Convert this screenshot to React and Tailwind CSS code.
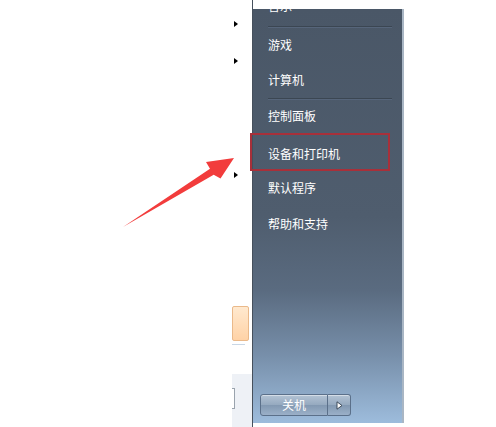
import React from "react";

const font = { fontFamily: '"Noto Sans CJK SC", "Noto Sans", sans-serif' };

const Tri = ({ className }) => (
  <div className={`ml-[2px] w-0 h-0 border-y-[3.5px] border-y-transparent border-l-[4px] border-l-black ${className}`} />
);

const Item = ({ label, className }) => (
  <div className={`flex items-center pl-[15px] text-[12px] leading-none text-white ${className}`}>{label}</div>
);

const Sep = ({ className }) => (
  <div className={`ml-[15px] w-[124px] border-t border-t-[#3b4652] border-b border-b-[#56657a] ${className}`} />
);

const btn =
  "h-full border border-[#5b708a] bg-[linear-gradient(to_bottom,#b3c3d4,#95a9bf_50%,#8399b2_52%,#9bb0c8)] shadow-[inset_0_1px_0_rgba(255,255,255,0.45)]";

const App = () => {
  return (
    <div className="relative flex w-[496px] h-[427px] bg-white overflow-hidden" style={font}>
      <div className="w-[232px]" />

      {/* left menu strip */}
      <div className="flex flex-col w-[20px] h-full">
        <Tri className="mt-[21px]" />
        <Tri className="mt-[31px]" />
        <Tri className="mt-[108px]" />
        <div className="mt-[128px] w-[17px] h-[35px] rounded-[2px] border border-[#eab98a] bg-[linear-gradient(to_bottom,#ffe9cf,#ffd2a6)]" />
        <div className="mt-[3px] w-[13px] h-px bg-[#c9d7e6]" />
        <div className="mt-[29px] flex-1 bg-[#eef1f6]">
          <div className="mt-[14px] w-[3px] h-[21px] border-y border-r border-[#9aa3ad] bg-white" />
        </div>
      </div>

      {/* start menu right pane */}
      <div className="flex flex-col w-[152px] h-full border-l border-[#46505c]">
        <div className="mt-[9px] h-[414px] flex flex-col overflow-hidden border-r-2 border-r-[#a9b6c4] bg-[linear-gradient(to_bottom,#4a5767_0%,#4f5d6e_50%,#5a6b80_68%,#7890ab_84%,#9dbcdc_100%)]">
          <Item label="音乐" className="mt-[-19px] h-[32px]" />
          <Sep className="mt-[4px]" />
          <Item label="游戏" className="h-[34px]" />
          <Item label="计算机" className="h-[35px]" />
          <Sep className="mt-[1px]" />
          <Item label="控制面板" className="h-[32px]" />
          <Item label="设备和打印机" className="h-[38px] pt-[5px]" />
          <Item label="默认程序" className="h-[35px] pt-[1px]" />
          <Item label="帮助和支持" className="h-[35px] pt-[2px]" />
          <div className="flex-1" />
          <div className="flex ml-[7px] mb-[7px] h-[22px]">
            <div className={`flex items-center justify-center w-[68px] rounded-l-[3px] text-[12px] text-white ${btn}`}>
              关机
            </div>
            <div className={`flex items-center justify-center w-[23px] rounded-r-[3px] border-l-0 ${btn}`}>
              <svg width="7" height="9" viewBox="0 0 7 9">
                <path d="M1 0.8 L6 4.5 L1 8.2 Z" fill="#ffffff" stroke="#3c4a5a" strokeWidth="1" />
              </svg>
            </div>
          </div>
        </div>
      </div>

      <div className="flex-1" />

      {/* red highlight box */}
      <div className="absolute z-10 left-[250px] top-[133px] w-[140px] h-[38px] border-2 border-[#a8303a]" />

      {/* red arrow */}
      <svg className="absolute z-10 left-0 top-0 pointer-events-none" width="496" height="427" viewBox="0 0 496 427">
        <polygon
          points="123,227 210,168.7 206,162 234,158 220.5,178.5 213.7,174.7"
          fill="#f23c3c"
        />
      </svg>
    </div>
  );
};

export default App;
